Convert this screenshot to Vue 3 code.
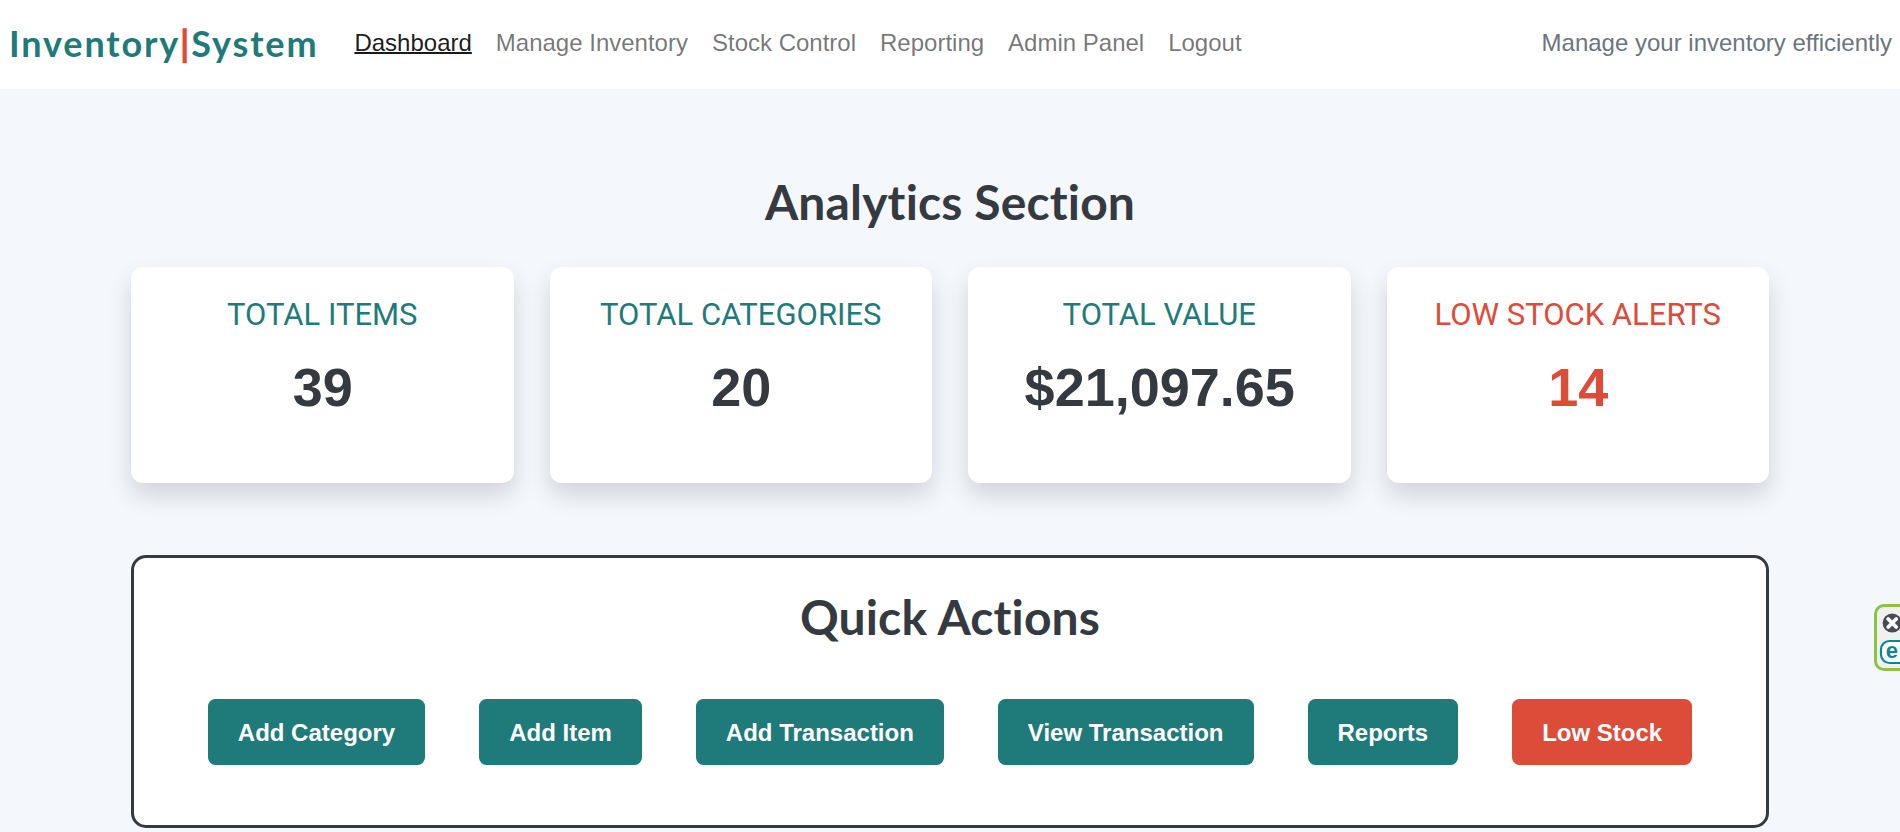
<script setup>
const links = ['Dashboard', 'Manage Inventory', 'Stock Control', 'Reporting', 'Admin Panel', 'Logout']
const stats = [
  { title: 'TOTAL ITEMS', value: '39' },
  { title: 'TOTAL CATEGORIES', value: '20' },
  { title: 'TOTAL VALUE', value: '$21,097.65' },
  { title: 'LOW STOCK ALERTS', value: '14', alert: true },
]
const actions = [
  { label: 'Add Category' },
  { label: 'Add Item' },
  { label: 'Add Transaction' },
  { label: 'View Transaction' },
  { label: 'Reports' },
  { label: 'Low Stock', alert: true },
]
</script>

<template>
  <div class="page">
    <header class="navbar">
      <a class="brand">Inventory<span class="bar">|</span>System</a>
      <nav class="links">
        <a v-for="(link, i) in links" :key="link" class="link" :class="{ active: i === 0 }">{{ link }}</a>
      </nav>
      <span class="tagline">Manage your inventory efficiently</span>
    </header>

    <main class="container">
      <h2 class="heading">Analytics Section</h2>
      <section class="stats">
        <article v-for="s in stats" :key="s.title" class="card" :class="{ alert: s.alert }">
          <h5 class="card-title">{{ s.title }}</h5>
          <p class="card-value">{{ s.value }}</p>
        </article>
      </section>

      <section class="quick">
        <h2 class="heading">Quick Actions</h2>
        <div class="actions">
          <button v-for="a in actions" :key="a.label" class="btn" :class="{ danger: a.alert }">{{ a.label }}</button>
        </div>
      </section>
    </main>

    <aside class="widget">
      <svg class="widget-icons" width="23" height="61" viewBox="0 0 23 61">
        <circle cx="15.2" cy="16" r="9.6" fill="#474c57" />
        <path d="M11.2 12l8 8M19.2 12l-8 8" stroke="#fff" stroke-width="3.8" stroke-linecap="round" />
        <rect x="4" y="34" width="27" height="22" rx="8.5" fill="#fff" stroke="#0b8793" stroke-width="2.2" />
        <text x="8.8" y="51.2" class="widget-letter">e</text>
      </svg>
    </aside>
  </div>
</template>

<style>
body {
  margin: 0;
  background: #f4f7fc;
  overflow: hidden;
}
</style>

<style scoped>
.page {
  position: relative;
  height: 832px;
  overflow: hidden;
  background: #f4f7fc;
  color: #343a40;
  font-family: "Liberation Sans", Arial, sans-serif;
  font-size: 24px;
  line-height: 36px;
}
.navbar {
  display: flex;
  align-items: center;
  height: 89px;
  padding: 0 8px 0 9px;
  box-sizing: border-box;
  background: #fff;
}
.brand {
  margin-right: 36px;
  padding-bottom: 4px;
  font-family: Lato, sans-serif;
  font-size: 36px;
  font-weight: 700;
  line-height: 54px;
  letter-spacing: 1.86px;
  color: #1f7a7a;
}
.bar {
  color: #dd4b39;
  -webkit-text-stroke: 0.6px #dd4b39;
}
.links {
  display: flex;
  gap: 24px;
  padding-bottom: 3px;
}
.link {
  color: rgba(0, 0, 0, 0.55);
}
.link.active {
  color: rgba(0, 0, 0, 0.9);
  text-decoration: underline;
  text-decoration-thickness: 2px;
}
.tagline {
  margin-left: auto;
  padding-bottom: 3px;
  color: #6c757d;
}
.container {
  width: 1638px;
  margin: 0 auto;
  padding-top: 84px;
}
.heading {
  margin: 0;
  font-family: Lato, sans-serif;
  font-size: 48px;
  font-weight: 700;
  line-height: 58px;
  letter-spacing: 0.15px;
  font-variant-ligatures: none;
  text-align: center;
}
.stats {
  display: grid;
  grid-template-columns: repeat(4, 1fr);
  gap: 36px;
  margin-top: 36px;
}
.card {
  height: 216px;
  padding-top: 30px;
  box-sizing: border-box;
  border-radius: 12px;
  background: #fff;
  box-shadow: 0 12px 24px rgba(0, 0, 0, 0.15);
  text-align: center;
}
.card-title {
  margin: 0;
  font-family: Roboto, sans-serif;
  font-size: 31px;
  font-weight: 400;
  line-height: 36px;
  color: #1f7a7a;
}
.card-value {
  margin: 14px 0 0;
  padding-left: 1px;
  font-size: 54px;
  font-weight: 700;
  line-height: 81px;
}
.alert .card-title,
.alert .card-value {
  color: #dd4b39;
}
.quick {
  height: 273px;
  margin-top: 72px;
  padding-top: 30px;
  box-sizing: border-box;
  border: 3px solid #343a40;
  border-radius: 15px;
  background: #fff;
}
.actions {
  display: flex;
  justify-content: center;
  gap: 54px;
  margin-top: 53px;
}
.btn {
  padding: 16px 30px 14px;
  border: 0;
  border-radius: 7.5px;
  background: #1f7a7a;
  color: #fff;
  font: 700 24px/36px "Liberation Sans", Arial, sans-serif;
}
.btn.danger {
  background: #dd4b39;
}
.widget {
  position: absolute;
  top: 604px;
  right: 0;
  width: 26px;
  height: 67px;
  box-sizing: border-box;
  border: 3px solid #8bc53f;
  border-right: 0;
  border-radius: 10px 0 0 10px;
  background: #f0f0f0;
}
.widget-icons {
  display: block;
}
.widget-letter {
  font: 700 22px "Liberation Sans", sans-serif;
  fill: #0b8793;
}
</style>
